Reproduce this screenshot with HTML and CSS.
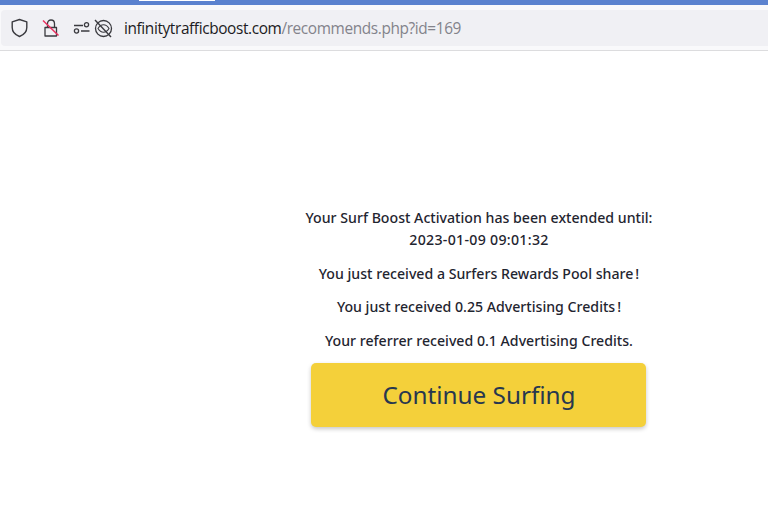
FILE: index.html
```html
<!DOCTYPE html>
<html lang="en">
<head>
<meta charset="utf-8">
<title>Continue Surfing</title>
<link rel="stylesheet" href="styles.css">
</head>
<body>
<header class="browser">
  <div class="titlebar"><div class="tab-edge"></div></div>
  <div class="toolbar">
    <div class="urlbar">
      <svg class="icon shield" width="18" height="20" viewBox="0 0 18 20" fill="none" stroke="#3a3a3f" stroke-width="1.4" stroke-linejoin="round"><path d="M8.500 1.500 L15.800 3.800 V9.500 C15.800 13.800 13 16.800 8.500 18.500 C4 16.800 1.200 13.800 1.200 9.500 V3.800 Z"/></svg>
      <svg class="icon lock" width="18" height="20" viewBox="0 0 18 20" fill="none" stroke-width="1.3"><path d="M5.500 9V5.800C5.500 3.500 7 2 9 2S12.500 3.500 12.500 5.800V9" stroke="#3a3a3f"/><path d="M3 9.500 H14.500 V18 H3 Z" stroke="#3a3a3f" stroke-linejoin="round"/><path d="M1 2.500 L16.500 17.500" stroke="#e8305f" stroke-width="1.500"/></svg>
      <svg class="icon perms" width="17" height="12" viewBox="0 0 17 12" fill="none" stroke="#3a3a3f" stroke-width="1.300"><path d="M1 3.500H10M8 9H16.500"/><circle cx="13.500" cy="2.800" r="2.100"/><circle cx="3.500" cy="9" r="2.100"/></svg>
      <svg class="icon track" width="19" height="19" viewBox="0 0 19 19" fill="none" stroke="#3a3a3f" stroke-width="1.300"><circle cx="9.500" cy="9.500" r="8"/><path d="M4 9.500C5.500 7 7.500 5.800 9.500 5.800S13.500 7 15 9.500C13.500 12 11.500 13.200 9.500 13.200S5.500 12 4 9.500Z" stroke-width="1.100"/><path d="M1 1 L17 18" stroke-width="1.400"/></svg>
      <div class="url"><span class="domain">infinitytrafficboost.com</span><span class="path">/recommends.php?id=169</span></div>
    </div>
  </div>
</header>
<main class="page">
  <section class="message">
    <p>Your Surf Boost Activation has been extended until:<br><span class="date">2023-01-09 09:01:32</span></p>
    <p>You just received a Surfers Rewards Pool share<span class="bang">!</span></p>
    <p>You just received 0.25 Advertising Credits<span class="bang">!</span></p>
    <p>Your referrer received 0.1 Advertising Credits.</p>
    <a class="continue" href="#">Continue Surfing</a>
  </section>
</main>
</body>
</html>
```
FILE: styles.css
```css
* { box-sizing: border-box; }
html, body { margin: 0; padding: 0; height: 100%; background: #fff; overflow: hidden; }
body { font-family: "Noto Sans", "Open Sans", sans-serif; color: #1f2530; }

.browser { height: 51px; background: #f9f9fb; border-bottom: 1px solid #dcdcde; }
.titlebar { height: 5px; background: #5b82cf; padding-left: 139px; }
.tab-edge { width: 76px; height: 1px; background: #fff; }
.toolbar { padding: 5px 0 0 1px; }
.urlbar { height: 36px; background: #f0f0f4; border-radius: 4px 0 0 4px; display: flex; align-items: center; padding-left: 10px; }
.icon { flex: none; display: block; }
.lock { margin-left: 13px; }
.perms { margin-left: 13px; }
.track { margin-left: 4px; }
.url { margin-left: 11px; font-family: "Open Sans", "Noto Sans", sans-serif; font-size: 15.4px; letter-spacing: -0.38px; white-space: nowrap; }
.domain { color: #1c1b22; }
.path { color: #83838b; }

.page { padding: 156px 0 0 287px; }
.message { width: 384px; display: flex; flex-direction: column; align-items: center; text-align: center; font-size: 14.15px; line-height: 22px; font-weight: 500; }
.message p { margin: 0 0 11.500px; white-space: nowrap; }
.date { letter-spacing: 0.3px; }
.bang { margin-left: 2px; }
.continue { width: 335px; height: 64px; margin-right: 1px; padding-left: 1px; display: flex; align-items: center; justify-content: center; background: #f4d03a; border-radius: 5px; box-shadow: 0 2px 4px rgba(0,0,0,.22); color: #27374f; font-size: 24.3px; font-weight: 400; text-decoration: none; }
```
